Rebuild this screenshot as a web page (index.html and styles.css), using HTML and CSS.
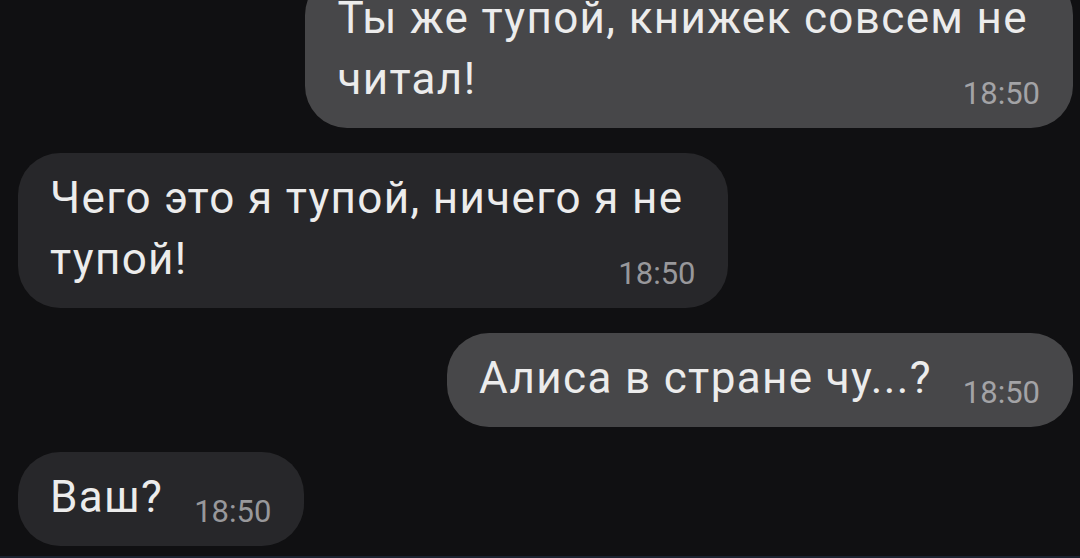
FILE: index.html
```html
<!DOCTYPE html>
<html lang="ru">
<head>
    <meta charset="UTF-8">
    <meta name="viewport" content="width=device-width, initial-scale=1.0">
    <title>Чат</title>
    <link rel="stylesheet" href="styles.css">
</head>
<body>

<div class="chat">
    <div class="message out">
        <span class="text">Ты же тупой, книжек совсем не<br>читал!</span>
        <span class="time">18:50</span>
    </div>

    <div class="message in">
        <span class="text">Чего это я тупой, ничего я не<br>тупой!</span>
        <span class="time">18:50</span>
    </div>

    <div class="message out">
        <span class="text">Алиса в стране чу...?</span>
        <span class="time">18:50</span>
    </div>

    <div class="message in">
        <span class="text">Ваш?</span>
        <span class="time">18:50</span>
    </div>
</div>

</body>
</html>
```

FILE: styles.css
```css
body {
    font-family: 'Roboto', 'Noto Sans', sans-serif;
    background-color: #101012;
    color: #ececec;
    margin: 0;
    padding: 0;
    height: 558px;
    overflow: hidden;
    box-sizing: border-box;
    border-bottom: 2px solid #1b2330;
}

.chat {
    display: flex;
    flex-direction: column;
    gap: 25px;
    margin-top: -27px;
    padding: 0 7px 0 18px;
}

.message {
    width: max-content;
    padding: 15px 45px 18px 32px;
    border-radius: 42px;
    font-size: 44px;
    line-height: 61px;
    letter-spacing: 1.35px;
}

.message.out {
    align-self: flex-end;
    background-color: #474749;
}

.message.in {
    align-self: flex-start;
    background-color: #27272a;
}

/* time sits on the last line, reaching a bit into the right padding */
.message .time {
    float: right;
    margin: 29px -12px 0 31px;
    font-size: 31px;
    line-height: 31px;
    letter-spacing: 0;
    color: #a3a3a6;
}

.message.in .time {
    color: #98989b;
}
```
